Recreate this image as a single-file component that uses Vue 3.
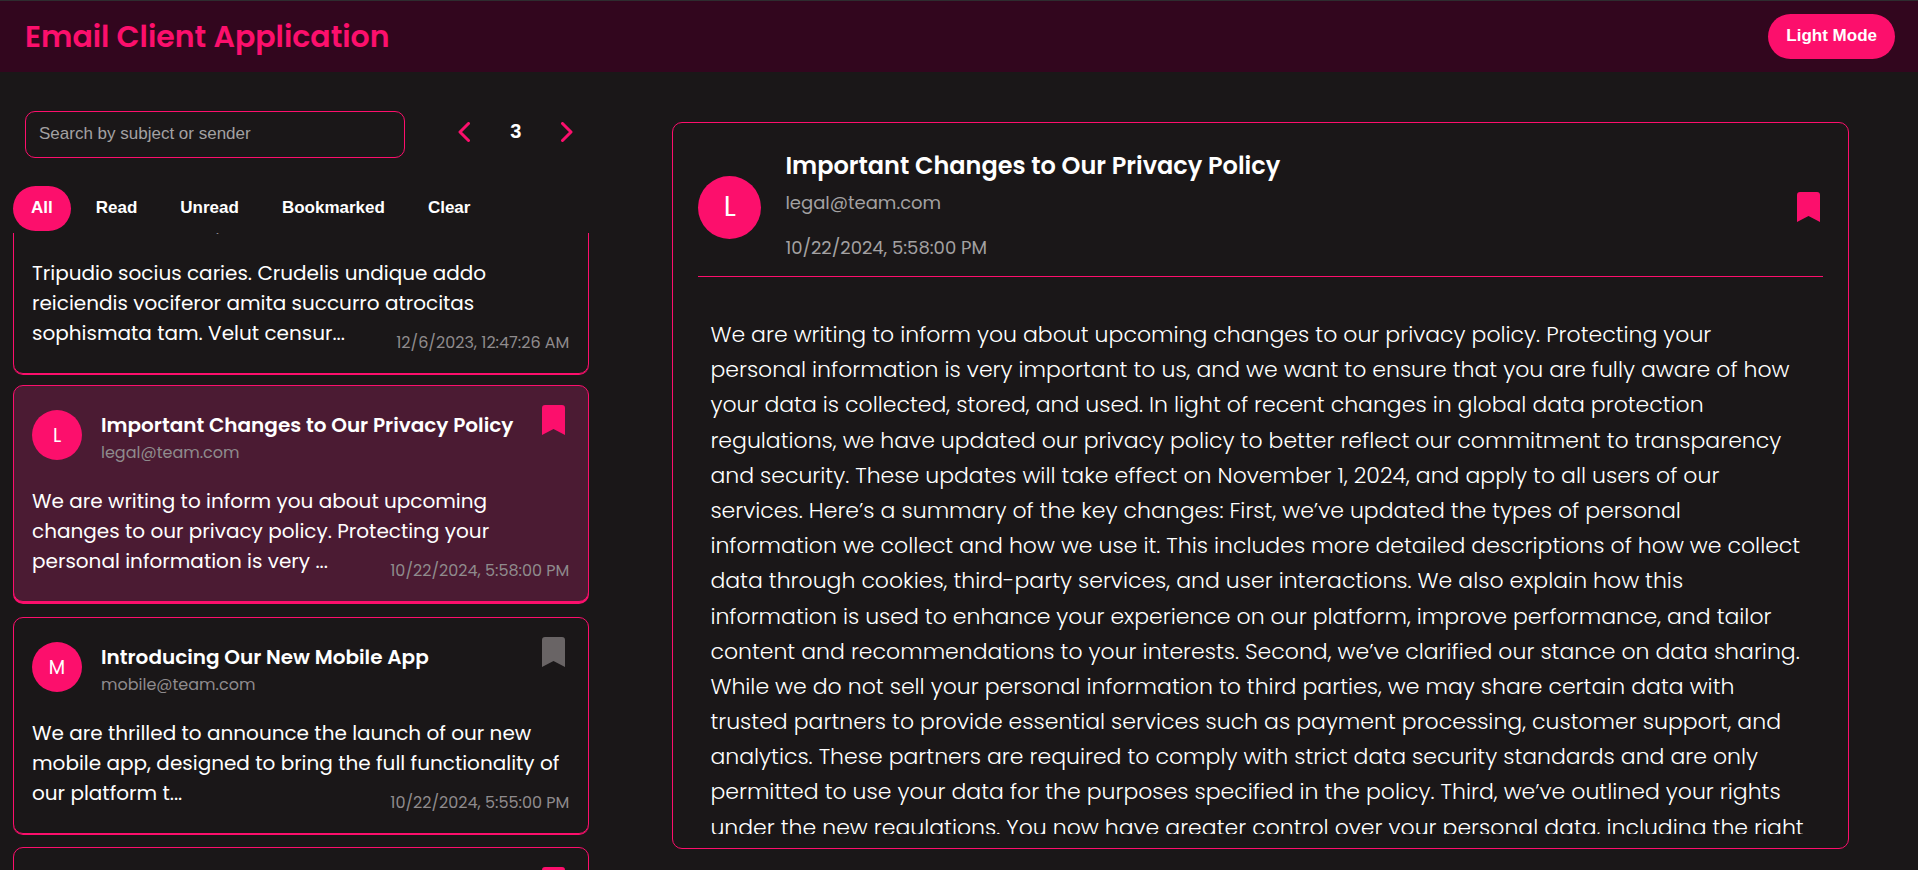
<script setup>
import { nextTick, onMounted, ref } from 'vue'

const filters = ['All', 'Read', 'Unread', 'Bookmarked', 'Clear']
const activeFilter = ref('All')
const query = ref('')
const page = ref(3)
const selectedId = ref(2)
const list = ref(null)

const emails = ref([
  {
    id: 1,
    subject: 'Tripudio socius caries',
    sender: 'Mia.Harris92@yahoo.com',
    preview:
      'Tripudio socius caries. Crudelis undique addo\nreiciendis vociferor amita succurro atrocitas\nsophismata tam. Velut censur...',
    date: '12/6/2023, 12:47:26 AM',
    bookmarked: false,
  },
  {
    id: 2,
    subject: 'Important Changes to Our Privacy Policy',
    sender: 'legal@team.com',
    preview:
      'We are writing to inform you about upcoming\nchanges to our privacy policy. Protecting your\npersonal information is very ...',
    date: '10/22/2024, 5:58:00 PM',
    bookmarked: true,
  },
  {
    id: 3,
    subject: 'Introducing Our New Mobile App',
    sender: 'mobile@team.com',
    preview:
      'We are thrilled to announce the launch of our new\nmobile app, designed to bring the full functionality of\nour platform t...',
    date: '10/22/2024, 5:55:00 PM',
    bookmarked: false,
  },
  {
    id: 4,
    subject: 'Scheduled Maintenance',
    sender: 'support@team.com',
    preview: 'We will be performing scheduled maintenance\non our servers this weekend. During this time\nsome services...',
    date: '10/22/2024, 5:50:00 PM',
    bookmarked: true,
  },
])

const message = `We are writing to inform you about upcoming changes to our privacy policy. Protecting your
personal information is very important to us, and we want to ensure that you are fully aware of how
your data is collected, stored, and used. In light of recent changes in global data protection
regulations, we have updated our privacy policy to better reflect our commitment to transparency
and security. These updates will take effect on November 1, 2024, and apply to all users of our
services. Here’s a summary of the key changes: First, we’ve updated the types of personal
information we collect and how we use it. This includes more detailed descriptions of how we collect
data through cookies, third-party services, and user interactions. We also explain how this
information is used to enhance your experience on our platform, improve performance, and tailor
content and recommendations to your interests. Second, we’ve clarified our stance on data sharing.
While we do not sell your personal information to third parties, we may share certain data with
trusted partners to provide essential services such as payment processing, customer support, and
analytics. These partners are required to comply with strict data security standards and are only
permitted to use your data for the purposes specified in the policy. Third, we’ve outlined your rights
under the new regulations. You now have greater control over your personal data, including the right
to access, correct, or delete your information at any time.`

const initial = (email) => email.sender[0].toUpperCase()

// Open the list a little below its top, close to the selected message.
onMounted(async () => {
  await nextTick()
  list.value.scrollTop = 76
})
</script>

<template>
  <div class="app">
    <header class="topbar">
      <h1>Email Client Application</h1>
      <button class="pill active" type="button">Light Mode</button>
    </header>

    <main class="content">
      <section class="sidebar">
        <div class="tools">
          <input v-model="query" class="search" type="text" aria-label="Search by subject or sender" placeholder="Search by subject or sender" />
          <nav class="pager" aria-label="Pages">
            <button type="button" aria-label="Previous page" @click="page = Math.max(1, page - 1)">
              <svg width="12" height="20" viewBox="0 0 12 20"><path d="M10.500 1.500 2 10l8.500 8.500" /></svg>
            </button>
            <span>{{ page }}</span>
            <button type="button" aria-label="Next page" @click="page += 1">
              <svg width="12" height="20" viewBox="0 0 12 20"><path d="M1.500 1.500 10 10l-8.500 8.500" /></svg>
            </button>
          </nav>
        </div>

        <div class="filters">
          <button
            v-for="name in filters"
            :key="name"
            type="button"
            class="pill"
            :class="{ active: name === activeFilter }"
            @click="activeFilter = name"
          >{{ name }}</button>
        </div>

        <ul ref="list" class="list">
          <li
            v-for="email in emails"
            :key="email.id"
            class="card"
            :class="{ selected: email.id === selectedId }"
            @click="selectedId = email.id"
          >
            <div class="card-head">
              <span class="avatar">{{ initial(email) }}</span>
              <div class="who">
                <h2>{{ email.subject }}</h2>
                <p>{{ email.sender }}</p>
              </div>
              <button
                class="bookmark"
                :class="{ on: email.bookmarked }"
                type="button"
                aria-label="Bookmark"
                @click.stop="email.bookmarked = !email.bookmarked"
              >
                <svg width="23" height="30" viewBox="0 0 23 30"><path d="M0 30V3a3 3 0 0 1 3-3h17a3 3 0 0 1 3 3v27l-11.500-6z" /></svg>
              </button>
            </div>
            <p class="preview">{{ email.preview }}</p>
            <time class="stamp">{{ email.date }}</time>
          </li>
        </ul>
      </section>

      <article class="detail">
        <header class="detail-head">
          <span class="avatar large">L</span>
          <div class="detail-who">
            <h2>Important Changes to Our Privacy Policy</h2>
            <p>legal@team.com</p>
            <time>10/22/2024, 5:58:00 PM</time>
          </div>
          <button class="bookmark on" type="button" aria-label="Bookmark">
            <svg width="23" height="30" viewBox="0 0 23 30"><path d="M0 30V3a3 3 0 0 1 3-3h17a3 3 0 0 1 3 3v27l-11.500-6z" /></svg>
          </button>
        </header>
        <div class="message"><p>{{ message }}</p></div>
      </article>
    </main>
  </div>
</template>

<style>
body {
  margin: 0;
  background: #1a1718;
}
</style>

<style scoped>
.app {
  --pink: #fc0f6c;
  display: flex;
  flex-direction: column;
  height: 100vh;
  overflow: hidden;
  background: #1a1718;
  color: #fff;
  font-family: Poppins, Inter, "Open Sans", sans-serif;
}

h1,
h2,
p,
ul {
  margin: 0;
  padding: 0;
}

button {
  padding: 0;
  border: 0;
  background: none;
  cursor: pointer;
}

svg {
  display: block;
}

.topbar {
  display: flex;
  flex: none;
  align-items: center;
  justify-content: space-between;
  box-sizing: border-box;
  height: 72px;
  padding: 0 23px 0 25px;
  border-top: 1px solid #2e2c2f;
  background: #32061e;
}

h1 {
  color: var(--pink);
  font-size: 30px;
  font-weight: 600;
  line-height: 44px;
}

.pill {
  height: 45px;
  padding: 0 18px 2px;
  border-radius: 23px;
  color: #fff;
  font: bold 17px "Liberation Sans", Arial, sans-serif;
}

.pill.active {
  background: var(--pink);
}

.content {
  display: flex;
  flex: 1;
  min-height: 0;
  padding: 0 69px 0 13px;
}

.sidebar {
  display: flex;
  flex: none;
  flex-direction: column;
  width: calc(30vw + 1px);
  padding-top: 39px;
}

.tools {
  display: flex;
  align-items: flex-start;
  gap: 53px;
  padding: 0 16px 0 12px;
}

.search {
  flex: 1;
  box-sizing: border-box;
  min-width: 0;
  height: 47px;
  padding: 0 13px 2px;
  border: 1px solid var(--pink);
  border-radius: 10px;
  outline: 0;
  background: transparent;
  color: #fff;
  font: 17px "Liberation Sans", Arial, sans-serif;
}

.search::placeholder {
  color: #a3a1a2;
}

.pager {
  display: flex;
  align-items: center;
  gap: 40px;
  height: 41px;
  font: bold 20px "Liberation Sans", Arial, sans-serif;
}

.pager path {
  fill: none;
  stroke: var(--pink);
  stroke-width: 3;
  stroke-linecap: round;
  stroke-linejoin: round;
}

.filters {
  display: flex;
  gap: 7px;
  margin: 28px 0 2px;
}

.list {
  flex: 1;
  min-height: 0;
  overflow-y: auto;
  scrollbar-width: none;
  list-style: none;
}

.card {
  position: relative;
  margin-bottom: 13px;
  padding: 19px 18px 25px;
  border: 1px solid var(--pink);
  border-radius: 10px;
  box-shadow: 0 1px 0 var(--pink);
  cursor: pointer;
}

.card.selected {
  background: #4b1b33;
  box-shadow: 0 2px 0 var(--pink);
  transform: translateY(-2px);
}

.card-head {
  display: flex;
  align-items: flex-start;
  padding-right: 5px;
}

.avatar {
  display: flex;
  flex: none;
  align-items: center;
  justify-content: center;
  width: 50px;
  height: 50px;
  margin: 5px 19px 0 0;
  border-radius: 50%;
  background: var(--pink);
  font-size: 19px;
}

.who {
  flex: 1;
  padding-top: 6px;
}

.who h2 {
  font-size: 20px;
  font-weight: 600;
  line-height: 29px;
}

.who p {
  color: #8f8b8d;
  font-size: 16px;
  line-height: 26px;
}

.bookmark path {
  fill: #696465;
}

.bookmark.on path {
  fill: var(--pink);
}

.preview {
  margin-top: 20px;
  font-size: 20px;
  line-height: 30px;
  white-space: pre-line;
}

.stamp {
  position: absolute;
  right: 19px;
  bottom: 18px;
  color: #8f8b8d;
  font-size: 16px;
  line-height: 24px;
}

.detail {
  display: flex;
  flex: 1;
  flex-direction: column;
  box-sizing: border-box;
  min-width: 0;
  margin: 50px 0 21px 83px;
  padding: 0 25px 14px;
  border: 1px solid var(--pink);
  border-radius: 10px;
}

.detail-head {
  display: flex;
  align-items: center;
  padding: 26px 3px 11px 0;
  border-bottom: 1px solid var(--pink);
}

.avatar.large {
  width: 63px;
  height: 63px;
  margin: 0 24px 0 0;
  font-size: 28px;
}

.detail-who {
  flex: 1;
}

.detail-who h2 {
  font-size: 24px;
  font-weight: 600;
  line-height: 34px;
}

.detail-who p {
  margin: 8px 0 16px;
  color: #a3a1a2;
  font-size: 18px;
  line-height: 24px;
}

.detail-who time {
  display: block;
  color: #a3a1a2;
  font-size: 18px;
  line-height: 34px;
}

.message {
  flex: 1;
  min-height: 0;
  padding: 0 12px;
  overflow-y: auto;
  scrollbar-width: none;
}

.message p {
  padding-top: 40px;
  font-size: 22px;
  font-weight: 300;
  line-height: 1.6;
  white-space: pre-line;
}
</style>
